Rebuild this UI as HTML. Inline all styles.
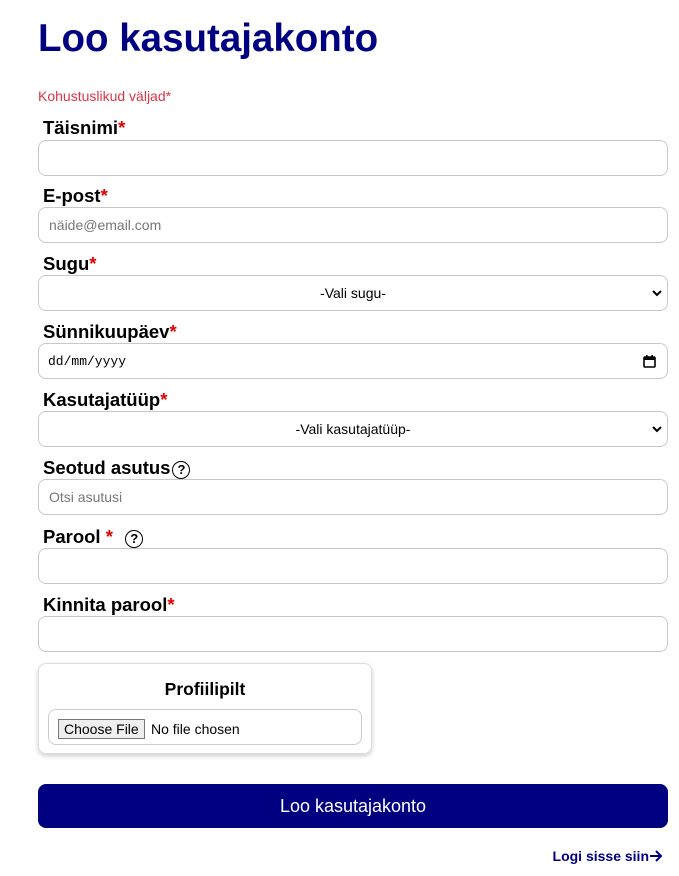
<!DOCTYPE html>
<html><head><meta charset="utf-8"><style>
body{margin:0;width:679px;height:876px;background:#fff;font-family:"Liberation Sans",Arial,sans-serif;position:relative;overflow:hidden}
.a{position:absolute}
h1{position:absolute;left:38px;top:14px;margin:0;font-size:38.5px;font-weight:bold;color:#000080;line-height:50px}
.req{left:38px;top:88px;font-size:14px;color:#dc3545}
.lab{position:absolute;left:43px;font-size:18.5px;font-weight:bold;color:#000;line-height:22px}
.lab i{font-style:normal;color:#e00000}
.inp{position:absolute;left:38px;width:628px;height:34px;border:1px solid #c8c8c8;border-radius:8px;font-size:14px;color:#777;box-sizing:content-box}
.inp span{position:absolute;left:10px;top:9px}
.sel{text-align:center;color:#000}
.sel span{position:static;display:block;margin-top:9px}
.chev{position:absolute;right:4px;top:12px}
.q{display:inline-block;width:16px;height:16px;border:1.7px solid #000;border-radius:50%;font-size:13px;text-align:center;line-height:16px;vertical-align:0px;margin-left:2px}
</style></head><body>
<h1>Loo kasutajakonto</h1>
<div class="a req">Kohustuslikud väljad*</div>

<div class="lab" style="top:117px">Täisnimi<i>*</i></div>
<div class="inp" style="top:140px"></div>

<div class="lab" style="top:185px">E-post<i>*</i></div>
<div class="inp" style="top:207px"><span>näide@email.com</span></div>

<div class="lab" style="top:253px">Sugu<i>*</i></div>
<div class="inp sel" style="top:275px"><span>-Vali sugu-</span><svg class="chev" width="12" height="10" viewBox="0 0 12 10"><path d="M2 3l4 4 4-4" stroke="#000" stroke-width="2" fill="none"/></svg></div>

<div class="lab" style="top:321px">Sünnikuupäev<i>*</i></div>
<div class="inp" style="top:343px;color:#000;font-family:'Liberation Mono',monospace"><span style="left:9px;top:10px;font-size:13px">dd/mm/yyyy</span>
<svg class="a" style="right:11px;top:11px" width="13" height="13" viewBox="0 0 13 13"><rect x="1" y="2" width="11" height="10" rx="1" fill="none" stroke="#000" stroke-width="1.6"/><rect x="1" y="2" width="11" height="3" fill="#000"/><rect x="3" y="0" width="1.6" height="3" fill="#000"/><rect x="8.4" y="0" width="1.6" height="3" fill="#000"/></svg></div>

<div class="lab" style="top:389px">Kasutajatüüp<i>*</i></div>
<div class="inp sel" style="top:411px"><span>-Vali kasutajatüüp-</span><svg class="chev" width="12" height="10" viewBox="0 0 12 10"><path d="M2 3l4 4 4-4" stroke="#000" stroke-width="2" fill="none"/></svg></div>

<div class="lab" style="top:457px">Seotud asutus<span class="q">?</span></div>
<div class="inp" style="top:479px"><span>Otsi asutusi</span></div>

<div class="lab" style="top:526px">Parool <i>*</i> &nbsp;<span class="q">?</span></div>
<div class="inp" style="top:548px"></div>

<div class="lab" style="top:594px">Kinnita parool<i>*</i></div>
<div class="inp" style="top:616px"></div>

<div class="a" style="left:38px;top:663px;width:334px;height:91px;border:1px solid #ddd;border-radius:8px;box-shadow:0 2px 5px rgba(0,0,0,.2);box-sizing:border-box">
<div style="text-align:center;font-weight:bold;font-size:17.5px;margin-top:15px">Profiilipilt</div>
<div class="a" style="left:9px;top:45px;width:314px;height:36px;border:1px solid #ccc;border-radius:8px;box-sizing:border-box;font-size:14px">
<span class="a" style="left:9px;top:9px;border:1px solid #777;background:#efefef;padding:1px 5px;font-size:14px;line-height:16px">Choose File</span>
<span class="a" style="left:102px;top:11px">No file chosen</span></div></div>

<div class="a" style="left:38px;top:784px;width:630px;height:44px;background:#000080;border-radius:8px;color:#fff;font-size:18px;text-align:center;line-height:44px">Loo kasutajakonto</div>
<div class="a" style="right:16px;top:848px;font-size:14px;font-weight:bold;color:#000080">Logi sisse siin<svg width="14" height="12" viewBox="0 0 14 12" style="vertical-align:-1px"><path d="M1 6h11M7 1l5 5-5 5" stroke="#000080" stroke-width="2" fill="none"/></svg></div>
</body></html>
